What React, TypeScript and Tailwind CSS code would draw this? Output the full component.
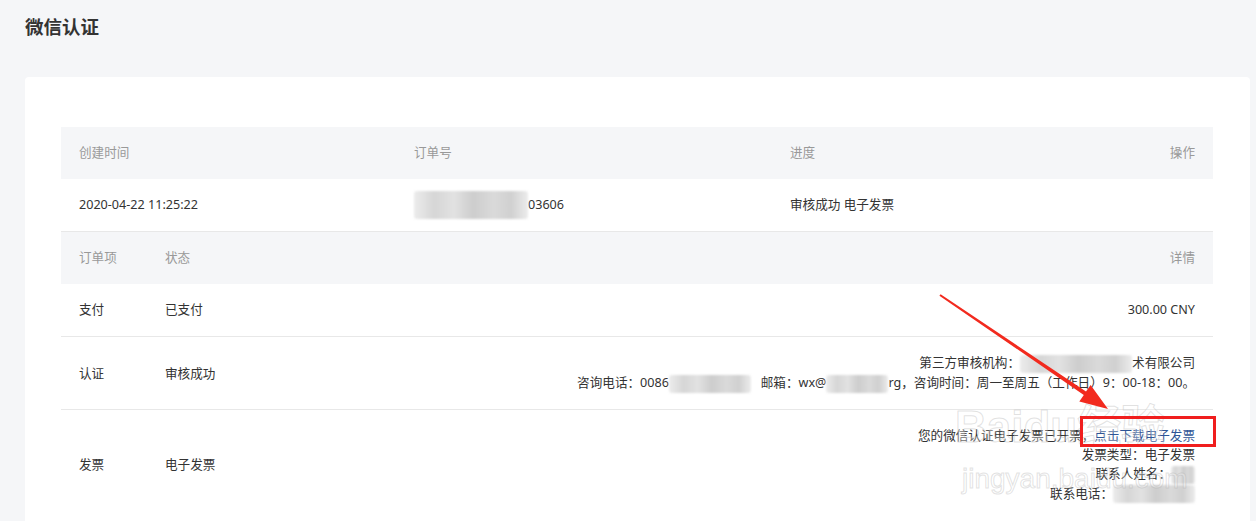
import React from "react";

function Blur({ w, h = 18 }: { w: number; h?: number }) {
  return (
    <span
      className="inline-block align-middle rounded-[3px] bg-[linear-gradient(90deg,#ececec_0%,#d6d6d6_18%,#e2e2e2_35%,#cdcdcd_52%,#dadada_70%,#d0d0d0_85%,#ececec_100%)] blur-[1px]"
      style={{ width: w, height: h }}
    />
  );
}

export default function App() {
  return (
    <div className="relative min-h-[521px] overflow-hidden bg-[#f5f6f8] pl-[25px] pr-[6px] pt-[14px] font-['Noto_Sans','Noto_Sans_CJK_SC',sans-serif] text-[12.6px] text-[#333]">
      <h1 className="text-[18.5px] font-bold leading-[24px] text-[#333] font-['Noto_Sans_CJK_SC',sans-serif]">微信认证</h1>

      <div className="mt-[39px] rounded-[4px] bg-white pl-[36px] pr-[37px] pt-[50px] pb-[10px]">
        {/* main table */}
        <div className="grid h-[52px] grid-cols-[335px_376px_1fr_auto] items-center bg-[#f5f6f8] px-[18px] text-[#999]">
          <div>创建时间</div>
          <div>订单号</div>
          <div>进度</div>
          <div>操作</div>
        </div>
        <div className="grid h-[53px] grid-cols-[335px_376px_1fr_auto] items-center border-b border-[#e8e8e8] px-[18px]">
          <div>2020-04-22 11:25:22</div>
          <div className="flex items-center">
            <Blur w={114} h={28} />
            <span>03606</span>
          </div>
          <div>审核成功 电子发票</div>
          <div></div>
        </div>

        {/* sub table */}
        <div className="grid h-[52px] grid-cols-[86px_1fr_auto] items-center bg-[#f5f6f8] px-[18px] text-[#999]">
          <div>订单项</div>
          <div>状态</div>
          <div>详情</div>
        </div>
        <div className="grid h-[53px] grid-cols-[86px_1fr_auto] items-center border-b border-[#e8e8e8] px-[18px]">
          <div>支付</div>
          <div>已支付</div>
          <div className="text-right">300.00 CNY</div>
        </div>
        <div className="grid h-[73px] grid-cols-[86px_1fr_auto] items-center border-b border-[#e8e8e8] px-[18px] leading-[19px]">
          <div>认证</div>
          <div>审核成功</div>
          <div className="text-right">
            <div>
              第三方审核机构：<Blur w={112} />术有限公司
            </div>
            <div>
              咨询电话：0086<Blur w={82} />&nbsp;&nbsp;&nbsp;邮箱：wx@<Blur w={62} />rg，咨询时间：周一至周五（工作日）9：00-18：00。
            </div>
          </div>
        </div>
        <div className="grid grid-cols-[86px_1fr_auto] items-center px-[18px] pt-[16px] pb-[20px] leading-[19px]">
          <div>发票</div>
          <div>电子发票</div>
          <div className="text-right">
            <div>
              您的微信认证电子发票已开票，<span className="text-[#2f5596]">点击下载电子发票</span>
            </div>
            <div>发票类型：电子发票</div>
            <div>
              联系人姓名：<Blur w={24} />
            </div>
            <div>
              联系电话：<Blur w={82} />
            </div>
          </div>
        </div>
      </div>

      {/* watermark */}
      <div className="pointer-events-none absolute left-[955px] top-[402px] text-[44px] font-bold leading-[50px] text-white/30 [-webkit-text-stroke:1px_rgba(170,170,170,0.35)] font-['Liberation_Sans','Noto_Sans_CJK_SC',sans-serif]">
        Baidu经验
      </div>
      <div className="pointer-events-none absolute left-[962px] top-[462px] text-[28px] leading-[34px] text-white/30 [-webkit-text-stroke:1px_rgba(170,170,170,0.35)] font-['Liberation_Sans',sans-serif]">
        jingyan.baidu.com
      </div>

      {/* red annotation box */}
      <div className="pointer-events-none absolute left-[1080px] top-[416px] h-[31px] w-[136px] border-[3px] border-[#f01e1e]" />

      {/* red arrow */}
      <svg className="pointer-events-none absolute left-0 top-0" width="1256" height="521" viewBox="0 0 1256 521">
        <polygon
          fill="#f22a1e"
          points="939.4,295.8 1083.8,394.9 1079.3,401.5 1108,409 1090.6,385 1086,391.6 940.6,294.2"
        />
      </svg>
    </div>
  );
}
